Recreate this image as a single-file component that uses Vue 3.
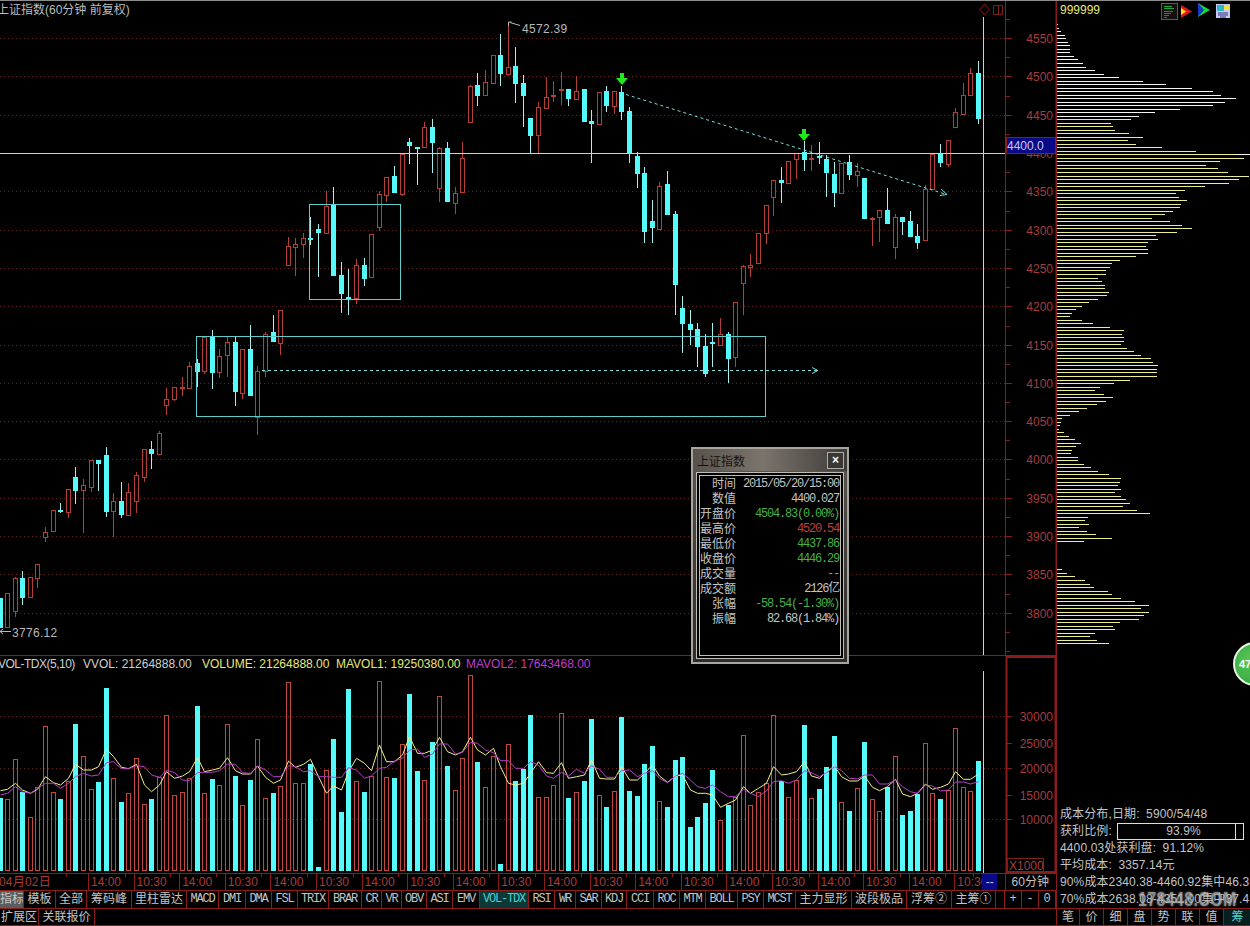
<script setup>
import { computed } from 'vue'

const STEP = 7.585
const barX = (i) => Math.floor(i * STEP) + 0.5

// type, high, body top, body bottom, low
const candles = [
  ['c',598,598,627,627],['r',593,593,627,627],['r',577,578,611,617],['c',571,578,597,605],['r',577,577,597,597],
  ['r',564,564,578,588],['r',527,532,537,542],['r',510,510,531,531],['c',503,510,511,513],['r',489,489,512,518],
  ['c',467,477,490,504],['r',479,485,490,533],['r',460,460,487,492],['c',460,460,463,491],['c',447,455,511,517],
  ['r',493,501,511,537],['c',482,501,514,518],['r',483,492,515,515],['r',472,475,501,513],['r',449,449,477,482],
  ['c',441,449,453,469],['r',431,433,454,454],['r',388,399,405,415],['r',387,387,399,401],['r',377,387,388,396],
  ['r',362,366,388,388],['c',359,363,371,387],['r',336,337,371,374],['c',330,337,372,389],['r',349,356,372,378],
  ['r',337,342,355,377],['c',337,342,391,406],['r',349,349,393,399],['c',325,349,395,396],['r',366,371,417,435],
  ['r',332,334,371,377],['c',315,332,341,342],['r',310,310,343,355],['r',237,246,265,265],['r',238,244,247,276],
  ['r',233,238,244,258],['c',217,238,239,245],['c',224,229,232,277],['r',191,206,233,233],['c',187,204,275,275],
  ['c',262,275,293,313],['c',269,297,298,315],['r',259,265,298,304],['c',258,265,278,286],['r',234,234,277,277],
  ['r',191,194,227,231],['r',177,177,195,202],['c',166,176,192,192],['r',154,154,194,196],['c',138,142,145,164],
  ['c',147,147,148,185],['r',122,127,147,147],['c',119,127,142,173],['r',147,148,188,202],['c',142,148,201,201],
  ['r',187,193,203,214],['r',142,158,192,192],['r',85,86,122,122],['c',73,85,95,106],['r',70,82,95,95],
  ['r',55,55,83,83],['c',34,55,73,86],['r',22,67,74,74],['c',47,66,83,103],['c',75,83,95,127],
  ['c',118,118,135,153],['r',102,107,135,153],['r',77,97,108,108],['r',81,95,96,102],['r',72,89,90,105],
  ['c',89,89,98,106],['r',76,91,99,99],['c',89,89,121,121],['c',110,121,123,163],['r',92,92,124,124],
  ['c',86,91,105,112],['r',91,91,106,114],['c',86,92,111,120],['c',107,111,153,163],['c',152,156,173,188],
  ['c',167,173,231,243],['c',200,221,227,243],['r',182,186,229,230],['c',171,184,214,214],['c',211,214,284,315],
  ['c',296,308,323,353],['c',310,324,329,345],['c',323,329,346,367],['c',334,346,373,377],['c',323,342,343,367],
  ['r',318,334,345,345],['c',332,334,358,383],['r',302,302,357,367],['r',265,266,283,315],['r',254,265,267,277],
  ['r',233,233,263,263],['r',205,205,233,244],['r',180,180,197,216],['c',167,180,182,203],['r',161,161,183,183],
  ['r',153,153,159,179],['c',141,152,159,171],['r',145,158,159,171],['c',142,156,157,164],['c',155,159,172,197],
  ['c',162,174,192,207],['r',163,163,193,193],['c',155,162,174,180],['r',163,171,175,187],['c',178,178,218,218],
  ['r',217,218,219,246],['r',210,210,217,242],['c',188,210,223,223],['r',214,217,247,259],['c',217,217,221,235],
  ['c',211,221,236,237],['c',224,236,242,249],['r',185,189,240,240],['r',154,154,189,189],['c',144,154,162,167],
  ['r',140,140,164,167],['r',108,112,127,127],['r',83,95,114,114],['r',68,73,95,95],['c',61,73,118,124]
]

// volume and moving averages, measured from y=650 in thirds of a pixel
const volTops = [
  445,448,328,427,502,412,229,427,447,394,222,319,418,396,114,385,457,430,325,463,447,381,196,436,427,385,168,430,
  387,406,223,378,466,390,268,445,430,409,97,400,400,343,651,361,267,487,117,394,427,379,94,382,385,283,132,364,
  391,276,139,349,421,325,76,337,412,319,643,283,394,358,196,442,442,406,190,445,427,394,208,436,472,424,202,424,
  439,343,289,454,472,331,322,532,502,460,361,511,466,440,256,466,427,400,196,394,442,391,226,445,418,352,259,
  457,484,415,277,448,484,410,319,496,484,432,280,430,448,421,235,412,424,334
]
const ma1 = [
  422,418,400,420,430,418,380,398,405,385,343,360,360,350,297,320,352,356,343,405,425,405,365,385,378,365,323,365,
  360,355,323,362,372,372,348,382,400,390,333,352,343,328,380,430,408,420,365,325,340,362,285,335,335,315,260,310,
  310,300,262,305,315,305,262,300,315,295,350,400,405,400,370,335,368,370,338,385,380,375,330,385,387,387,350,390,
  390,370,345,378,397,378,375,420,430,430,435,472,460,450,410,430,415,400,350,375,372,365,335,378,385,365,348,
  380,393,393,378,412,422,410,388,432,440,430,402,418,412,402,365,388,388,372
]
const ma2 = [
  435,430,410,425,430,415,400,400,415,400,380,370,378,375,338,335,356,356,347,350,375,382,360,368,390,392,368,367,
  367,362,342,343,368,370,348,360,380,380,347,350,365,362,380,380,382,382,353,360,385,378,355,352,333,325,300,298,
  322,312,282,282,312,307,277,280,300,308,332,332,355,355,335,345,378,385,367,378,358,370,347,358,382,382,362,360,
  380,370,362,385,398,378,370,390,410,415,405,425,440,440,418,430,440,422,395,392,400,390,362,368,380,368,350,
  362,385,387,375,375,402,402,390,410,425,430,405,408,423,420,396,396,402,395
]

const volY = (v) => 650 + v / 3
const volBars = computed(() =>
  volTops.map((v, i) => ({ x: barX(i), top: Math.round(volY(v)), kind: candles[i][0] }))
)
const linePoints = (arr) => arr.map((v, i) => `${barX(i)},${volY(v).toFixed(1)}`).join(' ')

const priceMarks = [
  [4550,38],[4500,76],[4450,115],[4400,153],[4350,191],[4300,230],[4250,268],[4200,306],
  [4150,345],[4100,383],[4050,421],[4000,459],[3950,498],[3900,536],[3850,574],[3800,613]
]
const minorTicks = [19,57,96,134,172,211,249,287,326,364,402,440,479,517,555,594,632,651]
const volMarks = [[30000,716],[25000,743],[20000,768],[15000,795],[10000,819]]
const volGrid = [716,768,819]

// chip distribution row lengths, top to bottom
const costRows = [
  1,2,4,8,9,11,13,13,13,17,21,26,29,38,47,62,86,109,135,156,164,179,168,156,123,98,82,
  74,54,56,58,72,86,71,79,105,139,178,187,163,149,161,171,192,182,172,148,128,119,122,130,124,123,116,108,95,113,
  125,135,120,99,101,91,89,91,91,79,63,55,53,49,49,41,45,48,48,52,50,41,32,25,19,
  15,13,25,36,53,67,65,67,67,64,70,77,84,94,96,101,100,100,100,73,57,43,38,47,56,49,40,30,22,13,
  5,4,3,2,7,12,18,24,19,15,14,21,21,27,34,41,52,64,63,61,64,58,64,69,73,66,80,93,31,28,32,22,30,39,55,27,
  0,0,0,0,0,0,0,5,10,18,28,33,37,51,55,64,78,92,84,92,87,82,63,56,58,38,33,40,52
]
const costBars = computed(() =>
  costRows.map((len, i) => ({ y: Math.round(i * 3.517 + 0.3), len, white: i < 27 }))
)

const timeLabels = Array.from({ length: 20 }, (_, i) => (i % 2 === 0 ? '14:00' : '10:30'))

const tabs = [
  ['指标',24,'cn active'],['模板',32,'cn'],['全部',31,'cn'],['筹码峰',45,'cn'],['里柱雷达',55,'cn'],
  ['MACD',32,'en'],['DMI',27,'en'],['DMA',26,'en'],['FSL',26,'en'],['TRIX',31,'en'],['BRAR',33,'en'],['CR',20,'en'],
  ['VR',20,'en'],['OBV',25,'en'],['ASI',26,'en'],['EMV',27,'en'],['VOL-TDX',49,'en current'],['RSI',26,'en'],
  ['WR',21,'en'],['SAR',26,'en'],['KDJ',25,'en'],['CCI',27,'en'],['ROC',26,'en'],['MTM',26,'en'],['BOLL',32,'en'],
  ['PSY',26,'en'],['MCST',32,'en'],['主力显形',56,'cn'],['波段极品',55,'cn'],['浮筹②',45,'cn'],['主筹①',44,'cn'],['',9,'cn']
]

const quoteRows = [
  ['时间','2015/05/20/15:00','gray'],
  ['数值','4400.027','gray'],
  ['开盘价','4504.83(0.00%)','green'],
  ['最高价','4520.54','red'],
  ['最低价','4437.86','green'],
  ['收盘价','4446.29','green'],
  ['成交量','--','olive'],
  ['成交额','2126亿','gray'],
  ['张幅','-58.54(-1.30%)','green'],
  ['振幅','82.68(1.84%)','gray']
]

const sideTabs = ['笔','价','细','盘','势','联','值','筹']
</script>

<template>
  <div class="screen">
    <div class="left">
      <svg class="chart" width="1056" height="655" viewBox="0 1 1056 655">
        <line v-for="m in priceMarks" :key="'g' + m[0]" class="grid" x1="0" x2="1006" :y1="m[1] + 0.5" :y2="m[1] + 0.5" />

        <text class="title" x="-3" y="14">上证指数(60分钟 前复权)</text>

        <g v-for="(c, i) in candles" :key="i">
          <line :class="c[0] === 'r' ? 'wick-r' : 'wick-c'" :x1="barX(i)" :x2="barX(i)" :y1="c[1]" :y2="c[4]" />
          <rect
            :class="c[0] === 'r' ? 'body-r' : 'body-c'"
            :x="barX(i) - 2"
            :y="c[2] + 0.5"
            width="4"
            :height="Math.max(c[3] - c[2], 1)"
          />
        </g>

        <rect class="note" x="309.5" y="204.5" width="91" height="95" />
        <rect class="note" x="196.5" y="336.5" width="569" height="80" />
        <line class="note-dash" x1="262" y1="370.5" x2="817" y2="370.5" />
        <path class="note-line" d="M812 367.5l6 3-6 3" />
        <line class="note-dash" x1="626" y1="94.5" x2="945" y2="194" />
        <path class="note-line" d="M941 189l6 5.500-7 1" />

        <path class="sig" d="M620 73h4v5h4l-6 7-6-7h4z" />
        <path class="sig" d="M802 129h4v5h4l-6 7-6-7h4z" />

        <path class="mark" d="M508.500 26v-4h3M510 22.500l10 3" />
        <text class="mark-text" x="522" y="33">4572.39</text>
        <path class="mark" d="M0 631.500h11M0 631.500l3-2.500M0 631.500l3 2.500" />
        <text class="mark-text" x="12" y="637">3776.12</text>

        <line class="cross" x1="0" x2="1006" y1="153.5" y2="153.5" />
        <line class="cross" x1="983.5" x2="983.5" y1="17" y2="655" />

        <path class="tool" d="M984.500 4l4.500 5.500-4.500 5.500-4.500-5.500z" />
        <path class="tool" d="M993.500 5.500h9v9h-9zM998.500 5.500v9" />

        <line class="axis" x1="1005.500" x2="1005.500" y1="1" y2="656" />
        <line class="axis" x1="1056" x2="1056" y1="1" y2="656" />
        <line class="axis" x1="0" x2="1056" y1="655.500" y2="655.500" />
        <g v-for="m in priceMarks" :key="'t' + m[0]">
          <line class="axis" x1="1006" x2="1012" :y1="m[1] + 0.5" :y2="m[1] + 0.5" />
          <text class="scale" x="1053" :y="m[1] + 4.500">{{ m[0] }}</text>
        </g>
        <line v-for="y in minorTicks" :key="'m' + y" class="axis" x1="1006" x2="1010" :y1="y + 0.5" :y2="y + 0.5" />

        <rect class="price-tag" x="1006.500" y="137.500" width="49" height="16" />
        <text class="price-tag-text" x="1007" y="149.500">4400.0</text>
      </svg>

      <svg class="volume" width="1056" height="217" viewBox="0 656 1056 217">
        <line v-for="y in volGrid" :key="y" class="grid" x1="0" x2="1006" :y1="y + 0.5" :y2="y + 0.5" />

        <text class="legend gray tight" x="-2" y="668">VOL-TDX(5,10)</text>
        <text class="legend gray" x="83" y="668">VVOL: 21264888.00</text>
        <text class="legend yellow" x="202" y="668">VOLUME: 21264888.00</text>
        <text class="legend yellow" x="336" y="668">MAVOL1: 19250380.00</text>
        <text class="legend violet" x="466" y="668">MAVOL2: 17643468.00</text>

        <g v-for="(b, i) in volBars" :key="i">
          <rect
            :class="b.kind === 'r' ? 'vol-r' : 'vol-c'"
            :x="b.x - 2"
            :y="b.top + 0.5"
            width="4"
            :height="870.500 - b.top - 0.5"
          />
        </g>
        <polyline class="ma-a" :points="linePoints(ma1)" />
        <polyline class="ma-b" :points="linePoints(ma2)" />

        <line class="cross" x1="983.500" x2="983.500" y1="671" y2="873" />

        <rect class="scale-box" x="1006.500" y="657" width="49" height="215" />
        <g v-for="m in volMarks" :key="'v' + m[0]">
          <line class="axis" x1="1006" x2="1012" :y1="m[1] + 0.5" :y2="m[1] + 0.5" />
          <text class="scale" x="1053" :y="m[1] + 4.500">{{ m[0] }}</text>
        </g>
        <rect class="unit-box" x="1007.500" y="858.500" width="36" height="14" />
        <text class="unit" x="1009" y="870">X1000</text>
      </svg>

      <div class="time-row">
        <div class="time-first">04月02日</div>
        <div v-for="(t, i) in timeLabels" :key="i" class="time-cell">{{ t }}</div>
        <div class="time-blue">--</div>
        <div class="time-period">60分钟</div>
      </div>

      <div class="tab-row">
        <div v-for="t in tabs" :key="t[0] + t[1]" class="tab" :class="t[2]" :style="{ width: t[1] + 'px' }">{{ t[0] }}</div>
        <div class="tab en step">+</div>
        <div class="tab en step">-</div>
        <div class="tab en step last">0</div>
      </div>

      <div class="tab-row second">
        <div class="tab cn wide-a">扩展区</div>
        <div class="tab cn wide-b">关联报价</div>
      </div>
    </div>

    <div class="right">
      <div class="right-head">
        <span class="code">999999</span>
        <div class="tools">
          <svg class="tool-list" width="17" height="17" viewBox="0 0 17 17">
            <rect x="0.500" y="0.500" width="16" height="16" fill="#141010" stroke="#b03430" />
            <path d="M3 3.500h8M3 5.500h10" stroke="#1ea83c" />
            <path d="M3 8.500h9M3 10.500h7M3 12.500h5M3 14.500h3" stroke="#d83028" />
          </svg>
          <svg class="tool-low" width="11" height="13" viewBox="0 0 11 13">
            <path d="M0 0l11 6.500-11 6.500z" fill="#e01818" />
            <path d="M0 3l5 3.500-5 3.500z" fill="#f4e020" />
          </svg>
          <svg width="12" height="14" viewBox="0 0 12 14">
            <path d="M0 0l12 7-12 7z" fill="#18d838" />
            <path d="M0 0l6 7-6 7z" fill="#1838c8" />
          </svg>
          <svg class="tool-mid" width="14" height="14" viewBox="0 0 14 14">
            <rect width="14" height="14" fill="#c8c8f4" />
            <rect x="1" y="1" width="7" height="6" fill="#28b8c8" />
            <rect x="8" y="2" width="5" height="4" fill="#f0e040" />
            <path d="M2 9h10M2 11h10M4 13h6" stroke="#303080" />
          </svg>
        </div>
      </div>

      <svg class="cost" width="193" height="632" viewBox="0 0 193 632">
        <rect
          v-for="(r, i) in costBars"
          :key="i"
          :class="r.white ? 'cost-white' : 'cost-yellow'"
          x="0"
          :y="r.y"
          :width="r.len"
          height="1"
        />
        <rect class="cost-white" x="178" y="130" width="15" height="1" />
      </svg>

      <div class="stats">
        <div>成本分布,日期: 5900/54/48</div>
        <div class="stat-bar">
          <span>获利比例:</span>
          <div class="ratio">93.9%<i></i></div>
        </div>
        <div>4400.03处获利盘: 91.12%</div>
        <div>平均成本: 3357.14元</div>
        <div class="nowrap">90%成本2340.38-4460.92集中46.3</div>
        <div class="nowrap">70%成本2638.08-4351.00集中37.4</div>
      </div>

      <div class="side-tabs">
        <div v-for="(s, i) in sideTabs" :key="s" class="side-tab" :class="{ on: i === 7 }">{{ s }}</div>
      </div>

      <div class="badge">47</div>
      <div class="stamp">178448.COM</div>
    </div>

    <div class="quote">
      <div class="quote-head">
        <span>上证指数</span>
        <div class="quote-close">×</div>
      </div>
      <div class="quote-body">
        <div v-for="q in quoteRows" :key="q[0]" class="quote-row">
          <span class="quote-label">{{ q[0] }}</span>
          <span class="quote-value" :class="q[2]">{{ q[1] }}</span>
        </div>
      </div>
    </div>
  </div>
</template>

<style scoped>
.screen {
  position: relative;
  display: flex;
  width: 1250px;
  height: 926px;
  box-sizing: border-box;
  border-top: 1px solid #8c8c8c;
  background: #000;
  overflow: hidden;
  font-family: 'Liberation Sans', 'Noto Sans CJK SC', sans-serif;
  font-size: 12px;
  color: #c4c4c4;
}
.left {
  display: flex;
  flex-direction: column;
  width: 1056px;
  flex: none;
}
svg {
  display: block;
}
.chart text,
.volume text {
  font-family: 'Liberation Sans', 'Noto Sans CJK SC', sans-serif;
  font-size: 12px;
}
.grid {
  stroke: #62281f;
  stroke-dasharray: 1 3;
}
.title {
  fill: #bcbcbc;
}
.wick-r {
  stroke: #b43e38;
}
.wick-c {
  stroke: #a8f0f0;
}
.body-r {
  fill: #000;
  stroke: #b43e38;
}
.body-c {
  fill: #55fafa;
  stroke: #55fafa;
}
.note {
  fill: none;
  stroke: #5ecccc;
}
.note-dash {
  stroke: #78dcdc;
  stroke-dasharray: 3 3;
}
.note-line {
  fill: none;
  stroke: #78dcdc;
}
.sig {
  fill: #20e81c;
}
.mark {
  fill: none;
  stroke: #bbb;
}
.chart .mark-text {
  fill: #b8b8b8;
  letter-spacing: 0.3px;
}
.cross {
  stroke: #cfcfcf;
}
.tool {
  fill: none;
  stroke: #7c2018;
}
.axis {
  stroke: #8c1c1c;
}
.scale {
  fill: #a83c3c;
  text-anchor: end;
}
.price-tag {
  fill: #0a0a88;
  stroke: #8c1c1c;
}
.price-tag-text {
  fill: #c8c8f0;
}
.legend.gray {
  fill: #cfcfcf;
}
.volume .legend.tight {
  letter-spacing: -0.5px;
}
.legend.yellow {
  fill: #e8e878;
}
.legend.violet {
  fill: #c03cc8;
}
.vol-r {
  fill: none;
  stroke: #c0483e;
}
.vol-c {
  fill: #55fafa;
  stroke: #55fafa;
}
.ma-a {
  fill: none;
  stroke: #f0f090;
}
.ma-b {
  fill: none;
  stroke: #b840c8;
}
.scale-box {
  fill: none;
  stroke: #8c1c1c;
  stroke-width: 2;
}
.unit-box {
  fill: none;
  stroke: #7c2018;
}
.unit {
  fill: #a83c3c;
}
.time-row {
  display: flex;
  height: 17px;
  line-height: 17px;
  border-top: 1px solid #8c1c1c;
  box-sizing: border-box;
  color: #a83c3c;
}
.time-first {
  position: relative;
  width: 89px;
  flex: none;
  margin-left: -1px;
  letter-spacing: 0.2px;
}
.time-first::after {
  content: '';
  position: absolute;
  top: 0;
  right: 21px;
  width: 1px;
  height: 3px;
  background: #8c1c1c;
}
.time-cell {
  position: relative;
  width: 45.6px;
  flex: none;
  box-sizing: border-box;
  padding-left: 2px;
  border-left: 1px solid #8c1c1c;
  white-space: nowrap;
  overflow: hidden;
}
.time-cell::after {
  content: '';
  position: absolute;
  top: 0;
  right: 8px;
  width: 1px;
  height: 3px;
  background: #8c1c1c;
}
.time-cell:nth-last-child(3) {
  width: 28px;
}
.time-blue {
  width: 15px;
  flex: none;
  background: #0a0a88;
  color: #c8c8f0;
  text-align: center;
}
.time-period {
  width: 49px;
  flex: none;
  margin-left: 8px;
  box-sizing: border-box;
  border-left: 1px solid #8c1c1c;
  color: #c4c4c4;
  text-align: center;
}
.tab-row {
  display: flex;
  height: 18px;
  box-sizing: border-box;
  border-top: 1px solid #8c1c1c;
}
.tab-row.second {
  border-bottom: 1px solid #8c1c1c;
}
.tab {
  flex: none;
  box-sizing: border-box;
  border-right: 1px solid #8c1c1c;
  line-height: 16px;
  text-align: center;
  white-space: nowrap;
  overflow: hidden;
}
.tab.wide-a {
  width: 39px;
}
.tab.wide-b {
  width: 56px;
}
.tab.en {
  font-family: 'Liberation Mono', monospace;
  letter-spacing: -1.2px;
}
.tab.active {
  background: #5c5c5c;
  color: #c8c8c8;
}
.tab.current {
  background: #0c3838;
  color: #50d0d0;
}
.tab.step {
  width: 17px;
  letter-spacing: 0;
}
.right {
  position: relative;
  display: flex;
  flex-direction: column;
  width: 194px;
  flex: none;
  box-sizing: border-box;
  border-left: 1px solid #8c1c1c;
}
.right-head {
  display: flex;
  height: 23px;
  flex: none;
  align-items: flex-start;
  padding: 2px 0 0 3px;
  box-sizing: border-box;
}
.code {
  color: #e8e878;
  line-height: 15px;
}
.tools {
  display: flex;
  gap: 6px;
  align-items: flex-start;
  margin-left: 61px;
}
.tool-list {
  margin-right: -3px;
}
.tool-low {
  margin-top: 2px;
}
.tool-mid {
  margin-top: 1px;
}
.cost-white {
  fill: #f4f4f4;
}
.cost-yellow {
  fill: #ecec90;
}
.stats {
  margin-top: auto;
  padding-left: 3px;
  line-height: 17px;
  word-spacing: 3px;
  letter-spacing: 0.12px;
}
.nowrap {
  white-space: nowrap;
}
.stat-bar {
  display: flex;
  align-items: center;
  word-spacing: 0;
}
.stat-bar span {
  width: 57px;
  flex: none;
}
.ratio {
  position: relative;
  width: 119px;
  height: 15px;
  padding-left: 6px;
  border: 1px solid #e8e890;
  line-height: 14px;
  text-align: center;
}
.ratio i {
  position: absolute;
  top: 0;
  right: 7px;
  bottom: 0;
  width: 1px;
  background: #e8e890;
}
.side-tabs {
  display: flex;
  height: 18px;
  flex: none;
  border-top: 1px solid #8c1c1c;
  border-bottom: 1px solid #8c1c1c;
  box-sizing: border-box;
}
.side-tab {
  width: 24px;
  flex: none;
  box-sizing: border-box;
  border-right: 1px solid #8c1c1c;
  line-height: 16px;
  text-align: center;
}
.side-tab:first-child {
  width: 23px;
}
.side-tab.on {
  width: 27px;
  border-right: 0;
  background: #06201f;
  color: #50d0d0;
}
.badge {
  position: absolute;
  top: 641px;
  left: 176px;
  width: 44px;
  height: 44px;
  box-sizing: border-box;
  border: 2px solid #e8f4e8;
  border-radius: 50%;
  background: radial-gradient(circle at 40% 40%, #58c858, #2e9e3c);
  color: #fff;
  font-weight: 700;
  font-size: 11px;
  line-height: 40px;
  padding-left: 4px;
}
.stamp {
  position: absolute;
  top: 886px;
  left: 81px;
  color: rgba(190, 190, 190, 0.6);
  font-size: 21px;
  font-weight: 700;
  line-height: 24px;
  letter-spacing: 0.5px;
  white-space: nowrap;
  text-shadow: 0 0 3px rgba(160, 160, 160, 0.7);
  transform: scaleX(0.76);
  transform-origin: left top;
}
.quote {
  position: absolute;
  top: 446px;
  left: 691px;
  width: 158px;
  height: 217px;
  box-sizing: border-box;
  border: 2px solid #a8a49e;
  background: linear-gradient(180deg, #5e5952 0%, #45413c 40%, #2e2c29 100%);
  padding: 0 3px 3px;
  display: flex;
  flex-direction: column;
}
.quote-head {
  display: flex;
  height: 22px;
  flex: none;
  align-items: center;
  justify-content: space-between;
  padding: 0 3px 0 4px;
  color: #141414;
  background: linear-gradient(90deg, #57524c 0%, #7a746c 45%, #3e3b37 100%);
  margin: 0 -3px;
}
.quote-close {
  width: 15px;
  height: 15px;
  border: 1px solid #b0aca6;
  background: #3a3835;
  color: #fff;
  line-height: 14px;
  text-align: center;
  font-weight: 700;
}
.quote-body {
  flex: 1;
  margin-top: 1px;
  border: 1px solid #c0bcb6;
  box-shadow: inset 0 0 0 2px #000, inset 0 0 0 3px #c0bcb6;
  background: #000;
  padding: 4px 3px 0 3px;
}
.quote-row {
  display: flex;
  height: 15px;
  line-height: 15px;
  justify-content: space-between;
  align-items: center;
}
.quote-label {
  width: 36px;
  flex: none;
  text-align: right;
  color: #c4c4c4;
}
.quote-value {
  font-family: 'Liberation Mono', 'Noto Sans CJK SC', monospace;
  letter-spacing: -1.2px;
  padding-right: 1px;
  white-space: nowrap;
}
.quote-value.gray {
  color: #c4c4c4;
}
.quote-value.green {
  color: #48b048;
}
.quote-value.red {
  color: #c04040;
}
.quote-value.olive {
  color: #a8a030;
}
</style>

<style>
html,
body {
  margin: 0;
  background: #000;
  overflow: hidden;
}
</style>
